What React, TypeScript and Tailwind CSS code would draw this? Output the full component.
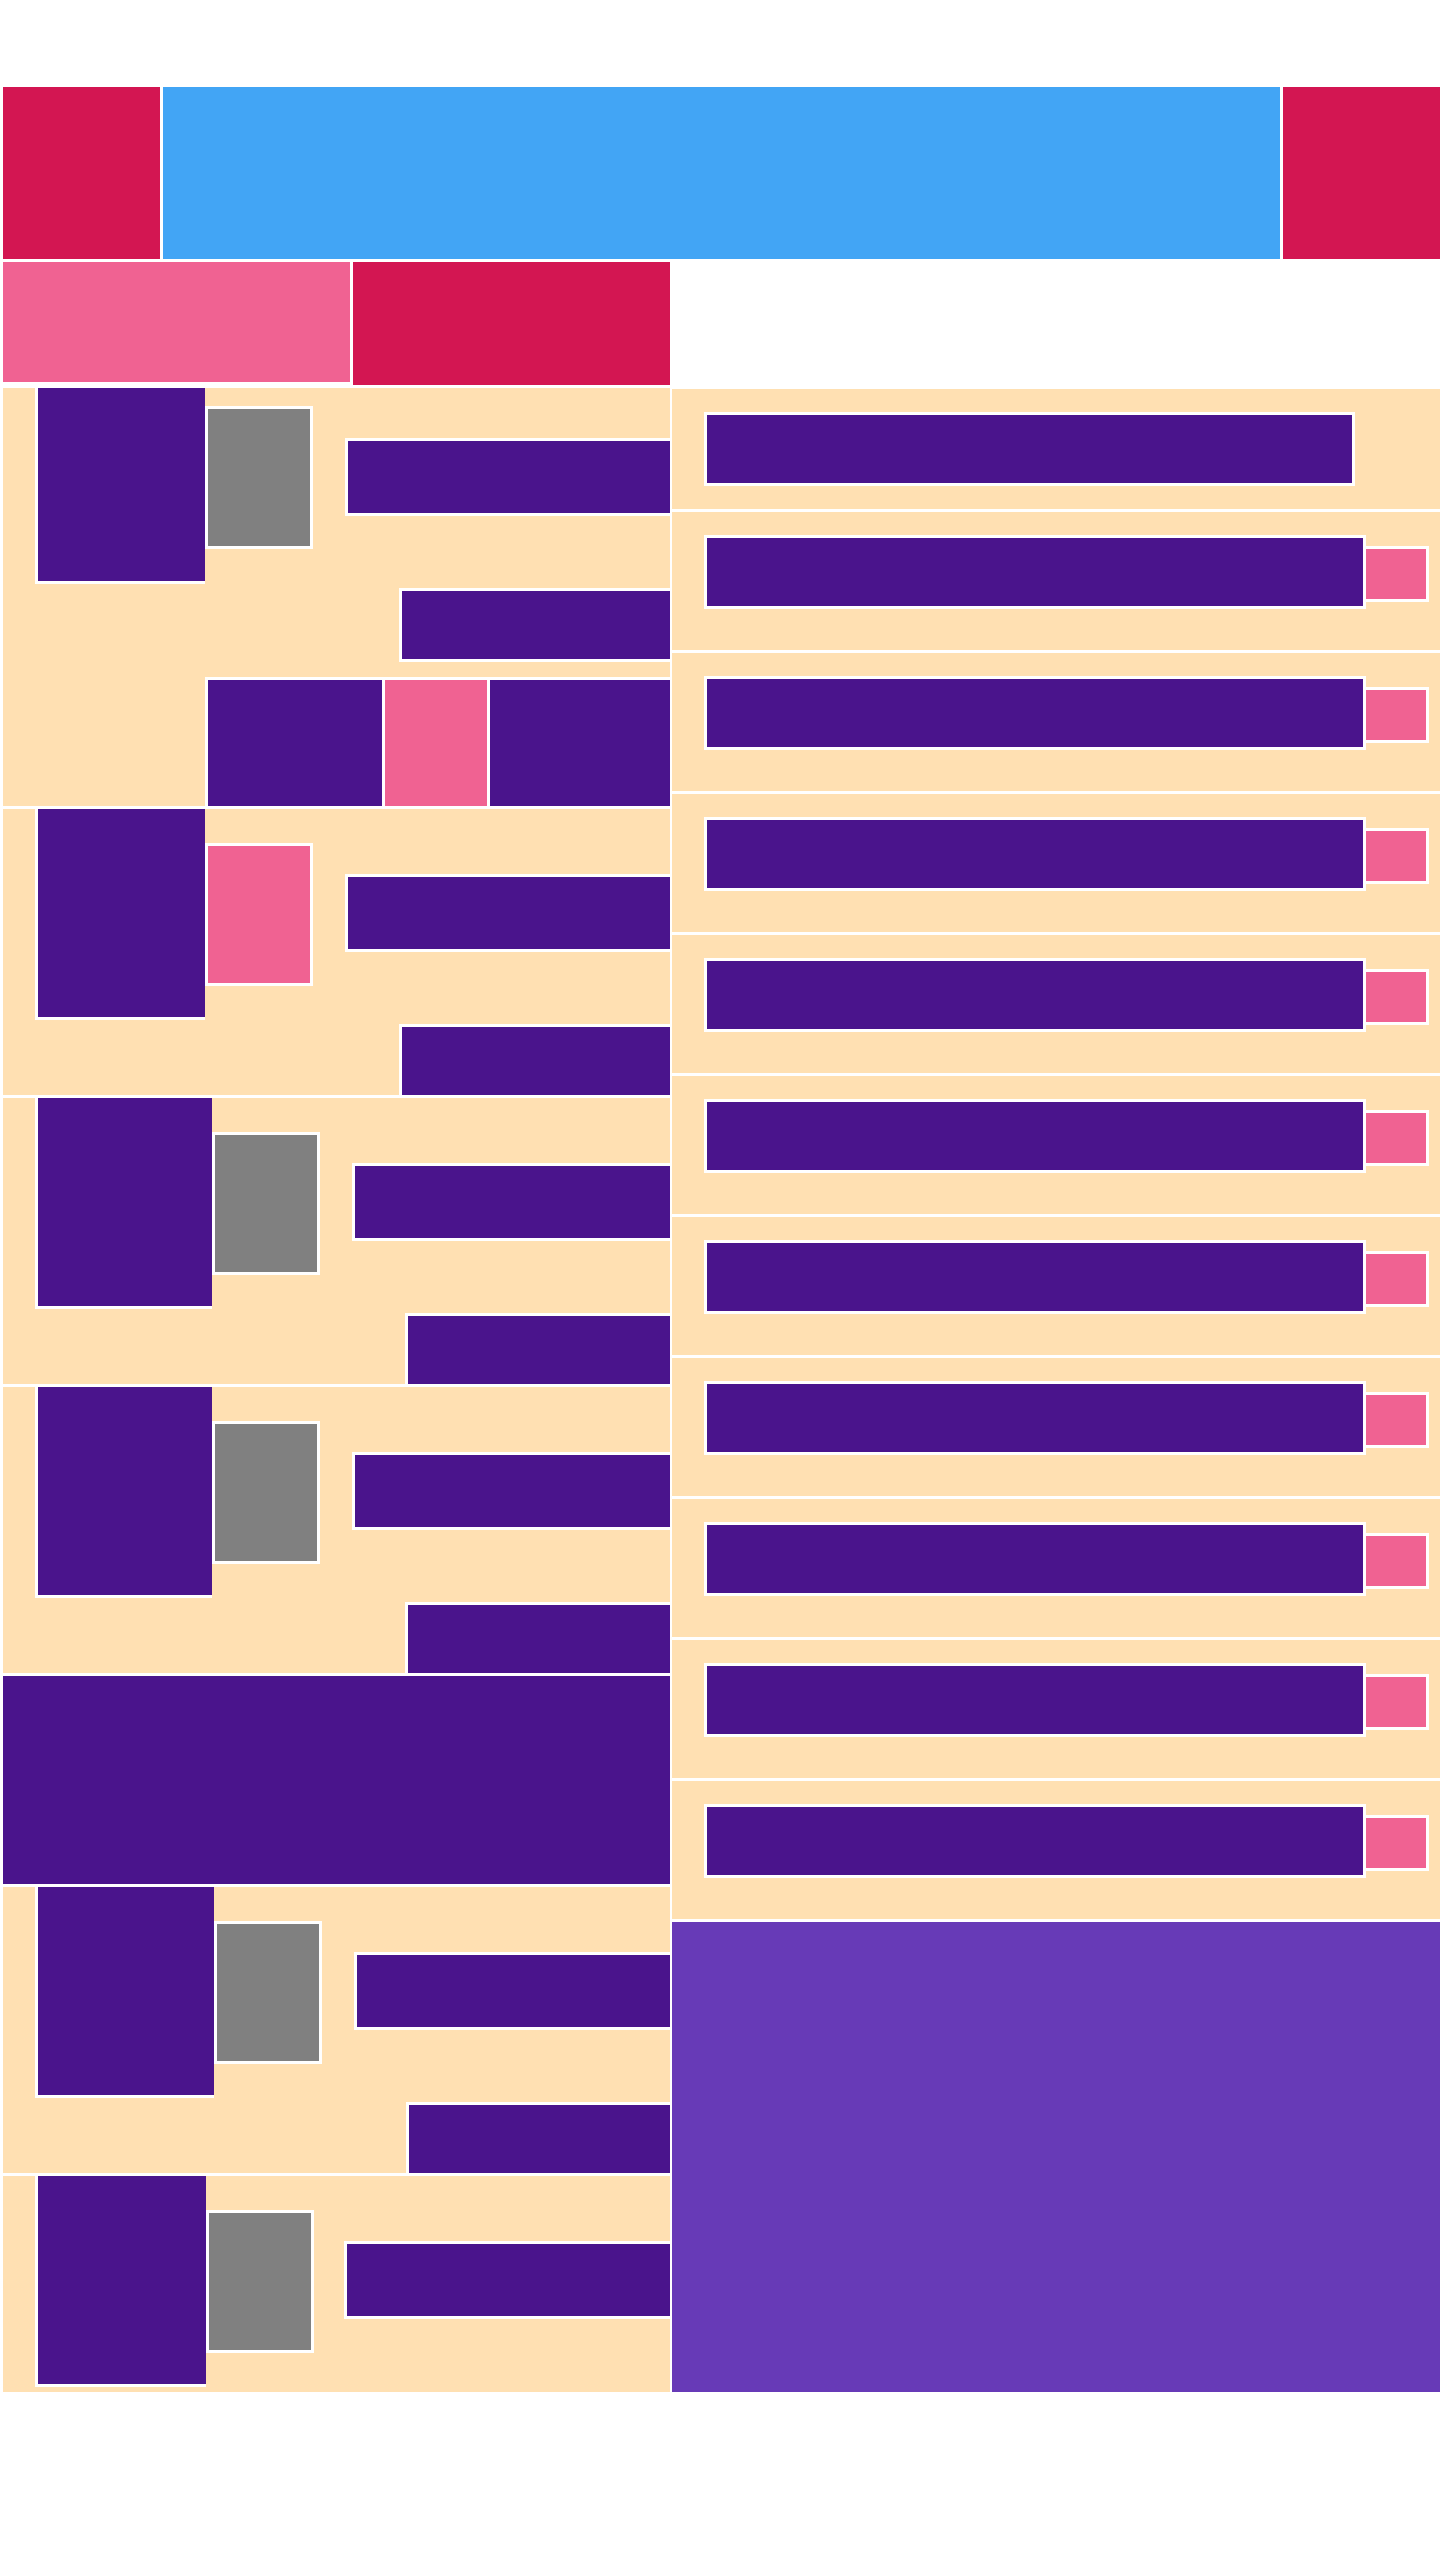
import React from 'react';

// section blocks for the left column: image, badge, title bar, price bar
type CardProps = {
    height: string;
    imageWidth: string;
    badge: string;
    titleWidth: string;
    priceWidth: string;
    showPrice?: boolean;
};

const Card = ({ height, imageWidth, badge, titleWidth, priceWidth, showPrice = true }: CardProps) => {
    return (
        <div className={`flex shrink-0 overflow-hidden bg-[#FFE0B2] ${height}`}>
            <div className={`ml-[32px] h-[211px] shrink-0 border-b-[3px] border-l-[3px] border-white bg-[#4A148C] ${imageWidth}`} />
            <div className={`mt-[34px] h-[143px] w-[108px] shrink-0 border-[3px] border-white ${badge}`} />
            <div className="flex flex-1 flex-col items-end">
                <div className={`mt-[65px] h-[78px] shrink-0 border-y-[3px] border-l-[3px] border-white bg-[#4A148C] ${titleWidth}`} />
                {showPrice && (
                    <div className={`mt-[72px] h-[71px] shrink-0 border-l-[3px] border-t-[3px] border-white bg-[#4A148C] ${priceWidth}`} />
                )}
            </div>
        </div>
    );
};

const ListRow = () => {
    return (
        <div className="flex h-[138px] shrink-0 items-start bg-[#FFE0B2] pl-[32px] pt-[23px]">
            <div className="h-[74px] w-[662px] border-[3px] border-white bg-[#4A148C]" />
            <div className="-ml-[3px] mt-[11px] h-[56px] w-[66px] border-[3px] border-white bg-[#F06292]" />
        </div>
    );
};

const App = () => {
    const rows = Array.from({ length: 10 }, (_, i) => i);

    return (
        <div className="relative h-[2560px] w-[1440px] overflow-hidden bg-white pt-[87px]">
            {/* header */}
            <div className="flex h-[172px] gap-[3px] pl-[3px]">
                <div className="w-[157px] bg-[#D31652]" />
                <div className="w-[1117px] bg-[#42A5F5]" />
                <div className="flex-1 bg-[#D31652]" />
            </div>

            {/* tabs */}
            <div className="mt-[3px] flex h-[123px] items-start gap-[3px] pl-[3px]">
                <div className="h-[120px] w-[347px] bg-[#F06292]" />
                <div className="h-[123px] w-[317px] bg-[#D31652]" />
            </div>

            {/* main */}
            <div className="mt-[3px] flex h-[2004px] gap-[2px] pl-[3px]">
                <div className="flex w-[667px] flex-col gap-[3px]">
                    {/* featured card */}
                    <div className="flex h-[418px] shrink-0 bg-[#FFE0B2]">
                        <div className="ml-[32px] h-[196px] w-[170px] shrink-0 border-b-[3px] border-l-[3px] border-white bg-[#4A148C]" />
                        <div className="flex flex-1 flex-col">
                            <div className="flex">
                                <div className="mt-[18px] h-[143px] w-[108px] shrink-0 border-[3px] border-white bg-[#808080]" />
                                <div className="flex flex-1 flex-col items-end">
                                    <div className="mt-[50px] h-[78px] w-[325px] border-y-[3px] border-l-[3px] border-white bg-[#4A148C]" />
                                    <div className="mt-[72px] h-[74px] w-[271px] border-y-[3px] border-l-[3px] border-white bg-[#4A148C]" />
                                </div>
                            </div>
                            <div className="mt-auto flex h-[129px] gap-[3px] border-l-[3px] border-t-[3px] border-white bg-white">
                                <div className="w-[174px] bg-[#4A148C]" />
                                <div className="w-[102px] bg-[#F06292]" />
                                <div className="flex-1 bg-[#4A148C]" />
                            </div>
                        </div>
                    </div>

                    <Card height="h-[286px]" imageWidth="w-[170px]" badge="bg-[#F06292]" titleWidth="w-[325px]" priceWidth="w-[271px]" />
                    <Card height="h-[286px]" imageWidth="w-[177px]" badge="bg-[#808080]" titleWidth="w-[318px]" priceWidth="w-[265px]" />
                    <Card height="h-[286px]" imageWidth="w-[177px]" badge="bg-[#808080]" titleWidth="w-[318px]" priceWidth="w-[265px]" />

                    <div className="h-[208px] shrink-0 bg-[#4A148C]" />

                    <Card height="h-[286px]" imageWidth="w-[179px]" badge="bg-[#808080]" titleWidth="w-[316px]" priceWidth="w-[264px]" />
                    <Card height="h-[216px]" imageWidth="w-[171px]" badge="bg-[#808080]" titleWidth="w-[326px]" priceWidth="w-[271px]" showPrice={false} />
                </div>

                <div className="flex flex-1 flex-col gap-[3px] pt-[1px]">
                    <div className="h-[120px] shrink-0 bg-[#FFE0B2] pl-[32px] pt-[23px]">
                        <div className="h-[74px] w-[651px] border-[3px] border-white bg-[#4A148C]" />
                    </div>
                    {rows.map((i) => (
                        <ListRow key={i} />
                    ))}
                    <div className="flex-1 bg-[#673AB7]" />
                </div>
            </div>
        </div>
    );
};

export default App;
